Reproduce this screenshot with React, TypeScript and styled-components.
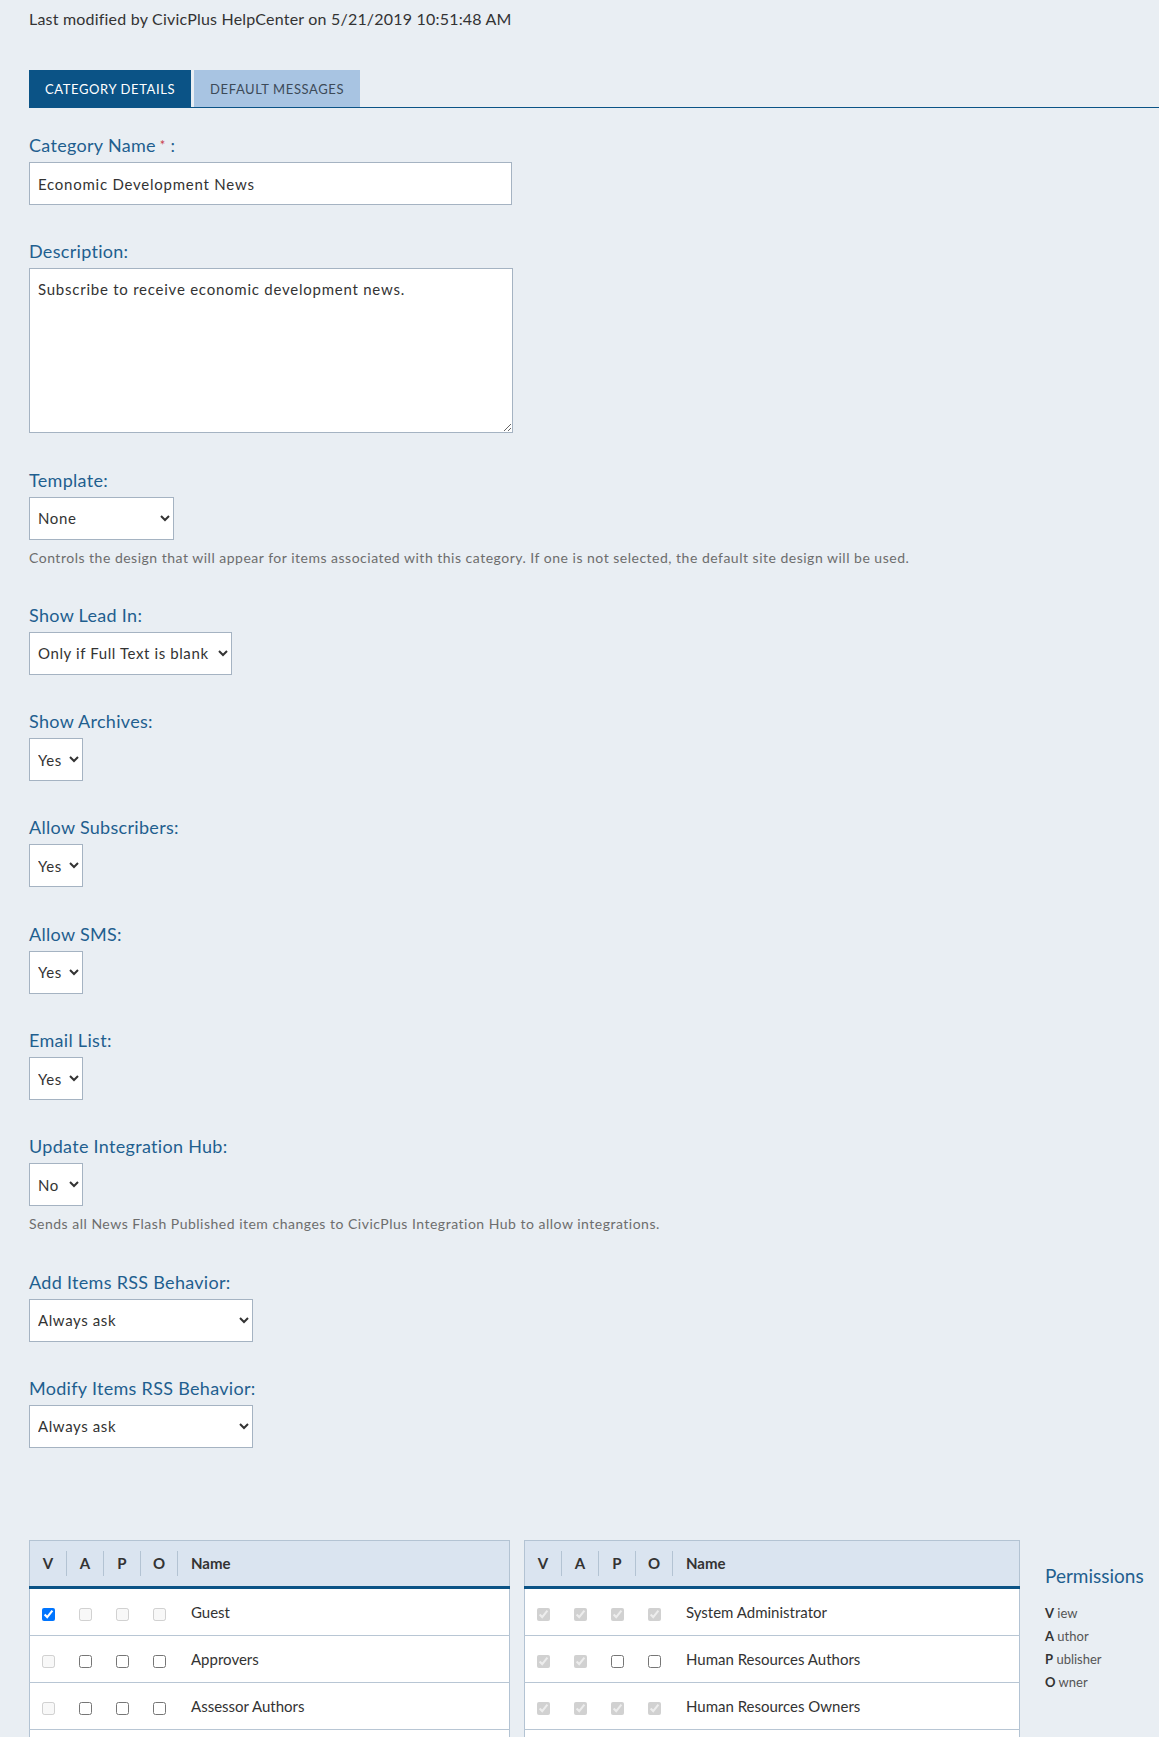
import React from 'react';
import styled, { createGlobalStyle } from 'styled-components';

const GlobalStyle = createGlobalStyle`
  body {
    margin: 0;
    background: #e9eef3;
    font-family: Lato, "Open Sans", sans-serif;
    color: #333;
  }
`;

type Perm = 'on' | 'off' | 'lockedOn' | 'lockedOff';

interface Group {
  name: string;
  perms: Perm[];
}

const leftGroups: Group[] = [
  { name: 'Guest', perms: ['on', 'lockedOff', 'lockedOff', 'lockedOff'] },
  { name: 'Approvers', perms: ['lockedOff', 'off', 'off', 'off'] },
  { name: 'Assessor Authors', perms: ['lockedOff', 'off', 'off', 'off'] },
  // the next row only shows its top edge in the screenshot
  { name: '', perms: ['lockedOff', 'off', 'off', 'off'] },
];

const rightGroups: Group[] = [
  { name: 'System Administrator', perms: ['lockedOn', 'lockedOn', 'lockedOn', 'lockedOn'] },
  { name: 'Human Resources Authors', perms: ['lockedOn', 'lockedOn', 'off', 'off'] },
  { name: 'Human Resources Owners', perms: ['lockedOn', 'lockedOn', 'lockedOn', 'lockedOn'] },
  { name: '', perms: ['lockedOn', 'lockedOn', 'lockedOn', 'off'] },
];

const PermTable = ({ groups }: { groups: Group[] }) => (
  <Table>
    <thead>
      <tr>
        {['V', 'A', 'P', 'O'].map((h) => (
          <HeadCell key={h}>
            <HeadLabel>{h}</HeadLabel>
          </HeadCell>
        ))}
        <NameHead>Name</NameHead>
      </tr>
    </thead>
    <tbody>
      {groups.map((g, row) => (
        <tr key={row}>
          {g.perms.map((p, i) => (
            <BoxCell key={i}>
              <Check
                type="checkbox"
                defaultChecked={p === 'on' || p === 'lockedOn'}
                disabled={p === 'lockedOn' || p === 'lockedOff'}
              />
            </BoxCell>
          ))}
          <NameCell>{g.name}</NameCell>
        </tr>
      ))}
    </tbody>
  </Table>
);

export default function App() {
  return (
    <Page>
      <GlobalStyle />
      <Modified>Last modified by CivicPlus HelpCenter on 5/21/2019 10:51:48 AM</Modified>

      <TabBar>
        <Tab $active>Category Details</Tab>
        <Tab>Default Messages</Tab>
      </TabBar>

      <Form>
        <Field>
          <Label>
            Category Name<Required>*</Required> :
          </Label>
          <TextInput defaultValue="Economic Development News" />
        </Field>

        <Field>
          <Label>Description:</Label>
          <TextArea defaultValue="Subscribe to receive economic development news." />
        </Field>

        <Field>
          <Label>Template:</Label>
          <Select $width={145} defaultValue="None">
            <option>None</option>
          </Select>
          <Help>
            Controls the design that will appear for items associated with this category. If one is not
            selected, the default site design will be used.
          </Help>
        </Field>

        <Field>
          <Label>Show Lead In:</Label>
          <Select $width={203} defaultValue="Only if Full Text is blank">
            <option>Only if Full Text is blank</option>
            <option>Always</option>
            <option>Never</option>
          </Select>
        </Field>

        <Field>
          <Label>Show Archives:</Label>
          <Select $width={54}>
            <option>Yes</option>
            <option>No</option>
          </Select>
        </Field>

        <Field>
          <Label>Allow Subscribers:</Label>
          <Select $width={54}>
            <option>Yes</option>
            <option>No</option>
          </Select>
        </Field>

        <Field>
          <Label>Allow SMS:</Label>
          <Select $width={54}>
            <option>Yes</option>
            <option>No</option>
          </Select>
        </Field>

        <Field>
          <Label>Email List:</Label>
          <Select $width={54}>
            <option>Yes</option>
            <option>No</option>
          </Select>
        </Field>

        <Field>
          <Label>Update Integration Hub:</Label>
          <Select $width={54}>
            <option>No</option>
            <option>Yes</option>
          </Select>
          <Help>Sends all News Flash Published item changes to CivicPlus Integration Hub to allow integrations.</Help>
        </Field>

        <Field>
          <Label>Add Items RSS Behavior:</Label>
          <Select $width={224}>
            <option>Always ask</option>
          </Select>
        </Field>

        <Field $last>
          <Label>Modify Items RSS Behavior:</Label>
          <Select $width={224}>
            <option>Always ask</option>
          </Select>
        </Field>
      </Form>

      <Permissions>
        <PermTable groups={leftGroups} />
        <PermTable groups={rightGroups} />
        <Legend>
          <LegendTitle>Permissions</LegendTitle>
          {['View', 'Author', 'Publisher', 'Owner'].map((w) => (
            <LegendItem key={w}>
              <b>{w[0]}</b> {w.slice(1)}
            </LegendItem>
          ))}
        </Legend>
      </Permissions>
    </Page>
  );
}

const Page = styled.div`
  padding: 9px 0 0 29px;
  overflow: hidden;
`;

const Modified = styled.div`
  font-size: 16px;
  line-height: 20px;
  letter-spacing: 0.2px;
  color: #333;
`;

const TabBar = styled.div`
  display: flex;
  gap: 3px;
  margin-top: 41px;
  border-bottom: 1px solid #0b5386;
`;

const Tab = styled.div<{ $active?: boolean }>`
  height: 37px;
  padding: 0 16px;
  display: flex;
  align-items: center;
  font-size: 13px;
  letter-spacing: 0.6px;
  text-transform: uppercase;
  background: ${(p) => (p.$active ? '#0b5386' : '#a8c4e2')};
  color: ${(p) => (p.$active ? '#fff' : '#3c4a58')};
`;

const Form = styled.div`
  padding-top: 26px;
`;

const Field = styled.div<{ $last?: boolean }>`
  margin-bottom: ${(p) => (p.$last ? '92px' : '35.3px')};
`;

const Label = styled.div`
  font-size: 18px;
  line-height: 23px;
  letter-spacing: 0.3px;
  color: #1f5f8f;
  margin-bottom: 5px;
`;

const Required = styled.span`
  color: #c8404a;
  font-size: 13px;
  vertical-align: top;
  margin-left: 4px;
`;

const controlBase = `
  box-sizing: border-box;
  display: block;
  border: 1px solid #a5b3c2;
  border-radius: 0;
  background: #fff;
  font-family: Lato, "Open Sans", sans-serif;
  font-size: 15px;
  letter-spacing: 0.76px;
  color: #333;
  outline: none;
`;

const TextInput = styled.input`
  ${controlBase}
  width: 483px;
  height: 43px;
  padding: 0 8px;
`;

const TextArea = styled.textarea`
  ${controlBase}
  width: 484px;
  height: 165px;
  padding: 10px 8px;
  line-height: 20px;
`;

const Select = styled.select<{ $width: number }>`
  ${controlBase}
  letter-spacing: 0.6px;
  width: ${(p) => p.$width}px;
  height: 43px;
  padding: 0 2px 0 4px;
`;

const Help = styled.div`
  margin-top: 7px;
  font-size: 14px;
  line-height: 22px;
  letter-spacing: 0.5px;
  color: #6d6d6d;
`;

const Permissions = styled.div`
  display: grid;
  grid-template-columns: 481px 496px auto;
  column-gap: 14px;
  align-items: start;
`;

const Table = styled.table`
  width: 100%;
  border-collapse: collapse;
  background: #fff;
  border: 1px solid #b3c3d3;
  font-size: 15px;
  color: #333;
`;

const HeadCell = styled.th`
  width: 37px;
  height: 45px;
  padding: 0;
  background: #dae4f0;
  border-bottom: 3px solid #0b5386;
  font-weight: 700;
`;

const HeadLabel = styled.span`
  display: block;
  line-height: 25px;
  border-right: 1px solid #b3c3d3;
`;

const NameHead = styled.th`
  height: 45px;
  padding: 0 0 0 13px;
  text-align: left;
  background: #dae4f0;
  border-bottom: 3px solid #0b5386;
  font-weight: 700;
`;

const BoxCell = styled.td`
  height: 46px;
  padding: 0;
  text-align: center;
  border-top: 1px solid #b8c6d4;
`;

const Check = styled.input`
  margin: 0;
  width: 13px;
  height: 13px;
  vertical-align: middle;
`;

const NameCell = styled.td`
  height: 46px;
  padding: 0 0 0 13px;
  border-top: 1px solid #b8c6d4;
`;

const Legend = styled.div`
  margin-left: 11px;
  padding-top: 25px;
`;

const LegendTitle = styled.div`
  font-size: 19px;
  line-height: 22px;
  color: #1f5f8f;
  margin-bottom: 15px;
`;

const LegendItem = styled.div`
  font-size: 13px;
  line-height: 23px;
  color: #555;

  b {
    color: #333;
  }
`;
